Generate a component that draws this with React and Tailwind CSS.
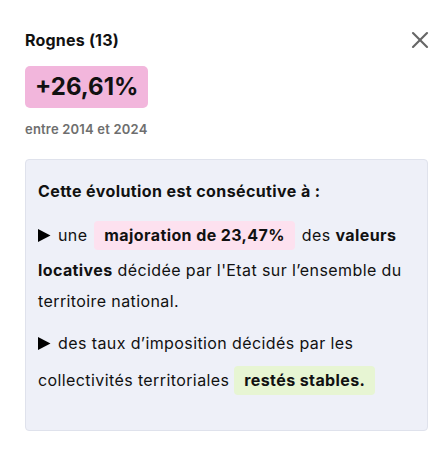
import { X } from 'lucide-react'

function Arrow() {
  return (
    <svg width="13" height="13" viewBox="0 0 13 13" className="inline-block mr-[7px] align-[-1px]">
      <path d="M0 0 L12.5 6.5 L0 13 Z" fill="#000" />
    </svg>
  )
}

export default function App() {
  return (
    <div className="w-[447px] h-[449px] bg-white pl-[25px] pr-[19px] pt-[28px] font-['Inter','Noto_Sans',sans-serif] text-[#111]">
      <div className="flex h-[24px] items-center justify-between">
        <h1 className="text-[16px] leading-[24px] font-bold tracking-[0.2px]">Rognes (13)</h1>
        <X size={28} strokeWidth={1.8} className="text-[#666] mr-[-6px]" />
      </div>

      <div className="mt-[14px] inline-block h-[42px] px-[10px] rounded-[5px] bg-[#f2b6dc] text-[24px] leading-[42px] font-bold">
        +26,61%
      </div>

      <p className="mt-[11px] text-[13px] leading-[20px] font-semibold text-[#6e6e6e] tracking-[0.2px]">entre 2014 et 2024</p>

      <div className="mt-[20px] h-[272px] rounded-[4px] border border-[#dfe2ec] bg-[#eef0f8] pl-[12px] pr-[10px] pt-[16px] text-[16px] leading-[31px] tracking-[0.4px]">
        <p className="font-bold">Cette évolution est consécutive à :</p>
        <p className="mt-[11px]">
          <Arrow />une{' '}
          <span className="inline-block mt-[3px] mb-[5px] mx-[2px] px-[10px] py-[4px] leading-[21px] rounded-[4px] bg-[#fde1ef] font-bold">majoration de 23,47%</span>{' '}
          des <b>valeurs locatives</b> décidée par l'Etat sur l’ensemble du territoire national.
        </p>
        <p className="mt-[11px]">
          <Arrow />des taux d’imposition décidés par les collectivités territoriales{' '}
          <span className="inline-block mt-[7px] mb-[3px] px-[10px] py-[4px] leading-[21px] rounded-[4px] bg-[#e7f5d3] font-bold">restés stables.</span>
        </p>
      </div>
    </div>
  )
}
